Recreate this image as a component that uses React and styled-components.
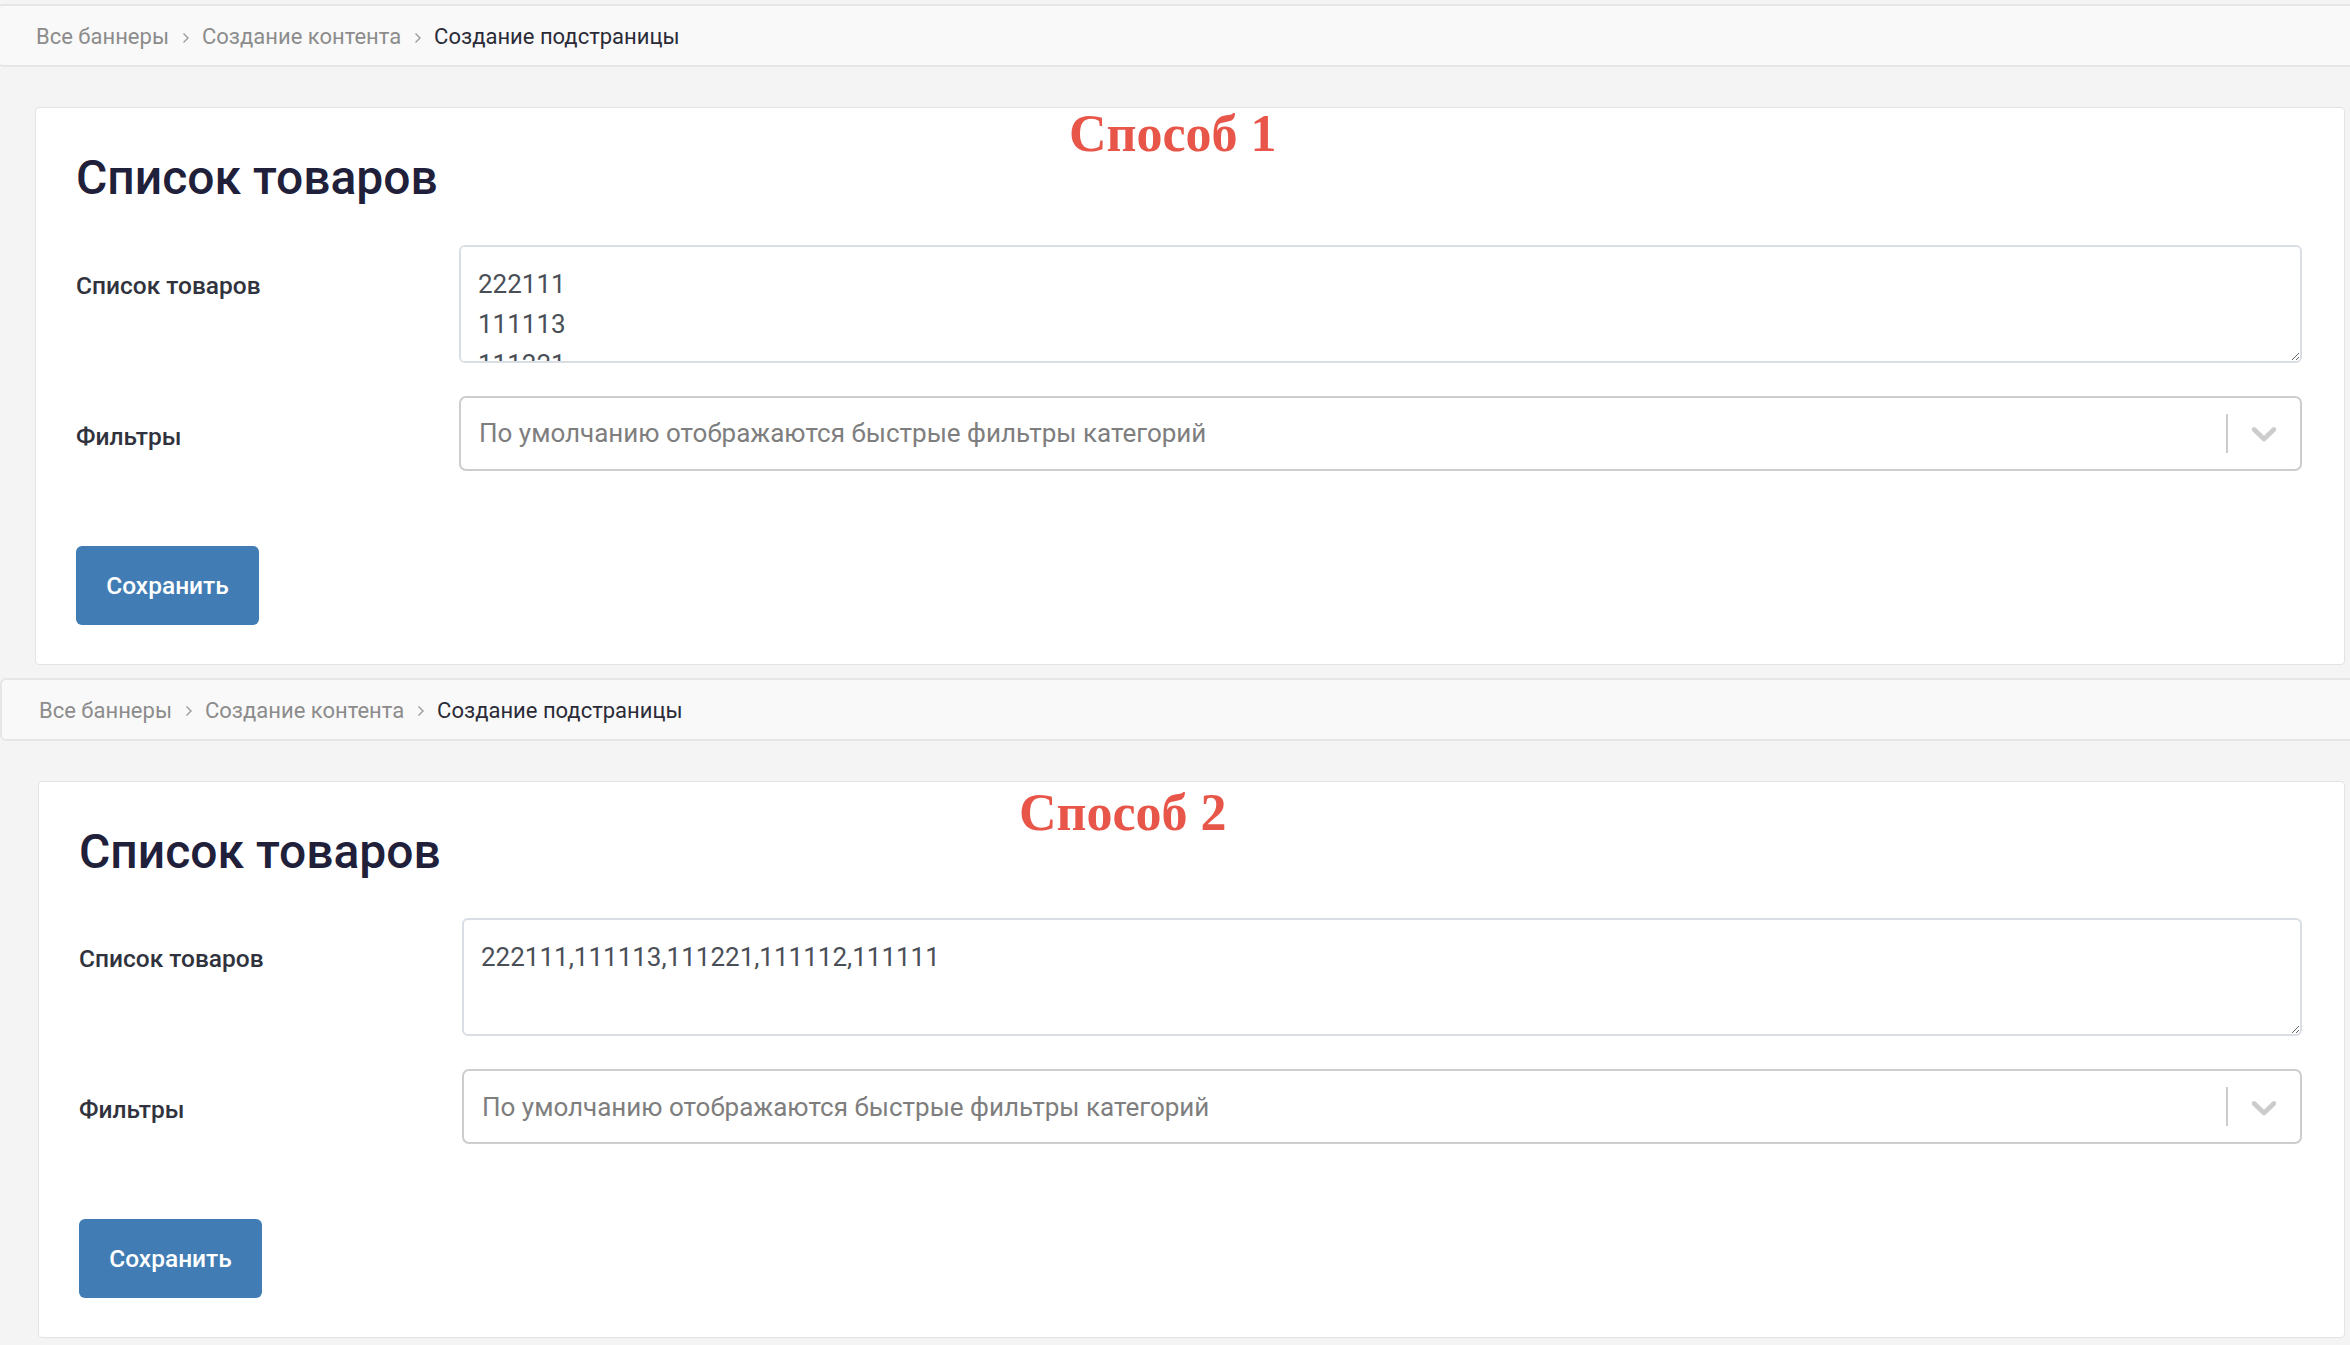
import React from "react";
import styled, { createGlobalStyle } from "styled-components";

const GlobalStyle = createGlobalStyle`
  html, body {
    margin: 0;
    padding: 0;
    background: #f4f4f4;
  }
  body {
    font-family: Roboto, "Noto Sans", sans-serif;
    overflow: hidden;
  }
  * {
    box-sizing: border-box;
  }
`;

const Page = styled.div`
  width: 2350px;
  height: 1345px;
  padding-top: 4px;
  overflow: hidden;
`;

// one stacked screenshot: breadcrumbs + form card
const Section = styled.section`
  padding-left: ${(p) => p.$shift}px;
  & + & {
    margin-top: 13px;
  }
`;

const BreadcrumbBar = styled.nav`
  height: 63px;
  margin: 0 -6px 0 -3px;
  padding: 2px 0 0 37px;
  display: flex;
  align-items: center;
  background: #f9f9f9;
  border: 2px solid #e6e6e6;
  border-radius: 6px;
`;

const Crumb = styled.span`
  font-size: 22px;
  color: ${(p) => (p.$active ? "#2b2b38" : "#8c8c8c")};
  white-space: nowrap;
`;

const CrumbSep = styled.svg`
  width: 8px;
  height: 12px;
  margin: 2px 12px 0 13px;
  flex-shrink: 0;
`;

const Card = styled.div`
  position: relative;
  margin: 40px 5px 0 35px;
  padding: 41px 42px 39px 40px;
  background: #fff;
  border: 1px solid #e3e3e3;
  border-radius: 4px;
`;

const Note = styled.div`
  position: absolute;
  left: ${(p) => p.$left}px;
  top: ${(p) => p.$top}px;
  font-family: "Liberation Serif", "Times New Roman", serif;
  font-weight: 700;
  font-size: 52px;
  line-height: 1;
  color: #e8564a;
  white-space: nowrap;
`;

const Title = styled.h1`
  margin: 0 0 38px;
  font-size: 48px;
  font-weight: 500;
  line-height: 1.2;
  color: #20203a;
`;

const FormGrid = styled.div`
  display: grid;
  grid-template-columns: 383px 1fr;
  row-gap: 33px;
`;

const Label = styled.label`
  padding-top: 21px;
  font-size: 24.5px;
  font-weight: 500;
  line-height: 40px;
  color: #30333d;
`;

const TextArea = styled.textarea`
  display: block;
  width: 100%;
  height: 118px;
  margin: 0;
  padding: 17px 17px;
  font-family: Roboto, "Noto Sans", sans-serif;
  font-size: 26px;
  line-height: 40px;
  color: #4a4f57;
  background: #fff;
  border: 2px solid #d9dee4;
  border-radius: 6px;
  outline: none;
  resize: vertical;
  scrollbar-width: none;
  &::-webkit-scrollbar {
    display: none;
  }
`;

const Select = styled.div`
  height: 75px;
  display: flex;
  align-items: center;
  padding-left: 18px;
  background: #fff;
  border: 2px solid #cdcdcd;
  border-radius: 7px;
`;

const Placeholder = styled.span`
  flex: 1;
  font-size: 26px;
  color: #7e7e7e;
  white-space: nowrap;
  overflow: hidden;
`;

const IndicatorSep = styled.span`
  width: 2px;
  height: 39px;
  background: #cccccc;
`;

const Indicator = styled.span`
  width: 72px;
  display: flex;
  align-items: center;
  justify-content: center;
  color: #cccccc;
`;

const SaveButton = styled.button`
  margin-top: 75px;
  width: 183px;
  height: 79px;
  border: none;
  border-radius: 6px;
  background: #417db4;
  color: #fff;
  font-family: Roboto, "Noto Sans", sans-serif;
  font-size: 24.5px;
  font-weight: 500;
  cursor: pointer;
`;

const Chevron = () => (
  <svg width="42" height="42" viewBox="0 0 20 20" fill="currentColor">
    <path d="M4.516 7.548c0.436-0.446 1.043-0.481 1.576 0l3.908 3.747 3.908-3.747c0.533-0.481 1.141-0.446 1.574 0 0.436 0.445 0.408 1.197 0 1.615-0.406 0.418-4.695 4.502-4.695 4.502-0.217 0.223-0.502 0.335-0.787 0.335s-0.57-0.112-0.789-0.335c0 0-4.287-4.084-4.695-4.502s-0.436-1.17 0-1.615z" />
  </svg>
);

const Sep = () => (
  <CrumbSep viewBox="0 0 8 12">
    <polyline points="1.5,1.5 6,6 1.5,10.5" fill="none" stroke="#9a9a9a" strokeWidth="1.4" />
  </CrumbSep>
);

const crumbs = ["Все баннеры", "Создание контента", "Создание подстраницы"];

const FormSection = ({ shift, note, noteLeft, noteTop, products }) => (
  <Section $shift={shift}>
    <BreadcrumbBar>
      {crumbs.map((c, i) => (
        <React.Fragment key={c}>
          {i > 0 && <Sep />}
          <Crumb $active={i === crumbs.length - 1}>{c}</Crumb>
        </React.Fragment>
      ))}
    </BreadcrumbBar>
    <Card>
      <Note $left={noteLeft} $top={noteTop}>{note}</Note>
      <Title>Список товаров</Title>
      <FormGrid>
        <Label>Список товаров</Label>
        <TextArea defaultValue={products} readOnly />
        <Label>Фильтры</Label>
        <Select>
          <Placeholder>По умолчанию отображаются быстрые фильтры категорий</Placeholder>
          <IndicatorSep />
          <Indicator>
            <Chevron />
          </Indicator>
        </Select>
      </FormGrid>
      <SaveButton>Сохранить</SaveButton>
    </Card>
  </Section>
);

export default function App() {
  return (
    <Page>
      <GlobalStyle />
      <FormSection
        shift={0}
        note="Способ 1"
        noteLeft={1033}
        noteTop={0}
        products={"222111\n111113\n111221\n111112\n111111"}
      />
      <FormSection
        shift={3}
        note="Способ 2"
        noteLeft={980}
        noteTop={5}
        products="222111,111113,111221,111112,111111"
      />
    </Page>
  );
}
